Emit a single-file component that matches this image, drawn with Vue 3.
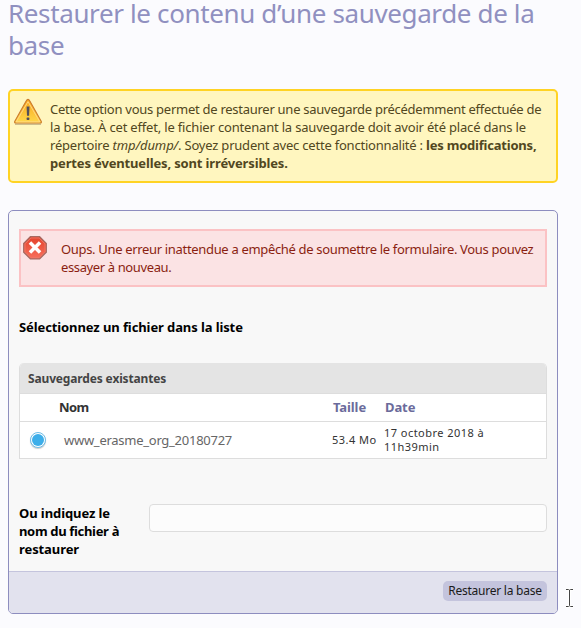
<script setup>
import { ref } from 'vue'

const selected = ref('www_erasme_org_20180727')
const fileName = ref('')
const backups = [
  { name: 'www_erasme_org_20180727', size: '53.4 Mo', date: ['17 octobre 2018 à', '11h39min'] },
]
</script>

<template>
  <main class="page">
    <h1 class="title">
      <span class="line">Restaurer le contenu d’une sauvegarde de la</span>
      <span class="line">base</span>
    </h1>

    <section class="notice">
      <svg class="warn" width="30" height="28" viewBox="0 0 30 28">
        <defs>
          <linearGradient id="amber" x1="0" y1="0" x2="0" y2="1">
            <stop offset="0" stop-color="#f8a51b" />
            <stop offset="1" stop-color="#ffd94c" />
          </linearGradient>
        </defs>
        <path d="M2 26.2H28" stroke="#b9a779" stroke-width="1.6" opacity=".7" />
        <path d="M15 1.4Q16 1.4 16.7 2.8L28.3 23.4Q28.7 25 27.3 25H2.7Q1.3 25 1.7 23.4L13.3 2.8Q14 1.4 15 1.4Z" fill="url(#amber)" stroke="#cb7a2d" stroke-width="1.1" />
        <path d="M15 3.6L26.8 23.9H3.2Z" fill="none" stroke="#ffd88a" stroke-width=".9" stroke-linejoin="round" />
        <path d="M13.6 8.6H16.5L16.1 17.8H14Z" fill="#534f5b" />
        <rect x="13.6" y="19.4" width="2.8" height="2.6" rx=".7" fill="#534f5b" />
      </svg>
      <p class="text">
        <span class="line n1">Cette option vous permet de restaurer une sauvegarde précédemment effectuée de</span>
        <span class="line n2">la base. À cet effet, le fichier contenant la sauvegarde doit avoir été placé dans le</span>
        <span class="line n3"><span>répertoire </span><i>tmp/dump/</i><span>. Soyez prudent avec cette fonctionnalité : </span><b>les modifications,</b></span>
        <b class="line n4">pertes éventuelles, sont irréversibles.</b>
      </p>
    </section>

    <form class="form" @submit.prevent>
      <div class="body">
        <div class="error">
          <svg class="stop" width="24" height="24" viewBox="0 0 24 24">
            <defs>
              <linearGradient id="red" x1="0" y1="0" x2="0" y2="1">
                <stop offset="0" stop-color="#e3422c" />
                <stop offset="1" stop-color="#f8705c" />
              </linearGradient>
            </defs>
            <path d="M7.4.7H16.6L23.3 7.4V16.2L16.6 22.9H7.4L.7 16.2V7.4Z" fill="url(#red)" stroke="#a66a62" stroke-width="1.3" />
            <path d="M7.9 2H16.1L22 7.9V15.7L16.1 21.6H7.9L2 15.7V7.9Z" fill="none" stroke="#ee7767" stroke-width=".9" />
            <path d="M8.2 7.7L15.8 15.3M15.8 7.7L8.2 15.3" stroke="#fff" stroke-width="3.5" stroke-linecap="square" />
          </svg>
          <p class="text">
            <span class="line e1">Oups. Une erreur inattendue a empêché de soumettre le formulaire. Vous pouvez</span>
            <span class="line e2">essayer à nouveau.</span>
          </p>
        </div>

        <h2 class="pick">Sélectionnez un fichier dans la liste</h2>

        <div class="table">
          <div class="caption">Sauvegardes existantes</div>
          <div class="row head">
            <span></span>
            <span class="nom">Nom</span>
            <span class="link">Taille</span>
            <span class="link">Date</span>
          </div>
          <label v-for="b in backups" :key="b.name" class="row data">
            <span class="radio" :class="{ on: selected === b.name }"></span>
            <span class="name">{{ b.name }}</span>
            <span class="small">{{ b.size }}</span>
            <span class="small"><span v-for="d in b.date" :key="d" class="line">{{ d }}</span></span>
          </label>
        </div>

        <div class="field">
          <label class="label" for="file">
            <span class="line l1">Ou indiquez le</span>
            <span class="line l2">nom du fichier à</span>
            <span class="line l3">restaurer</span>
          </label>
          <input id="file" v-model="fileName" class="input" type="text" />
        </div>
      </div>
      <div class="footer">
        <button class="button" type="submit">Restaurer la base</button>
      </div>
    </form>

    <svg class="cursor" width="9" height="20" viewBox="0 0 9 20">
      <path d="M1 1.5H3.5L4.5 2.2L5.5 1.5H8M4.5 2V17.5M1 18.5H3.5L4.5 17.8L5.5 18.5H8" fill="none" stroke="#fff" stroke-width="3" />
      <path d="M1 1.5H3.5L4.5 2.2L5.5 1.5H8M4.5 2V17.5M1 18.5H3.5L4.5 17.8L5.5 18.5H8" fill="none" stroke="#444" stroke-width="1" />
    </svg>
  </main>
</template>

<style>
body { background: #fbfbfe; overflow: hidden; }
</style>

<style scoped>
* { box-sizing: border-box; }
.page { position: relative; width: 581px; height: 628px; overflow: hidden; padding-left: 8px; font: 13px/18px "Noto Sans", sans-serif; color: #000; }
.line { display: block; white-space: pre; }
.title { margin: -3px 0 0; font-size: 26px; line-height: 32px; font-weight: 400; letter-spacing: -.37px; color: #9090c0; }
.notice { display: flex; width: 550px; height: 94px; margin-top: 28px; border: 2px solid #ffd324; border-radius: 5px; background: #fff6bf; color: #514721; }
.warn { flex: none; margin: 7px 7px 0 3px; }
.text { margin: 9px 0 0; }
.n1 { letter-spacing: -.268px; }
.n2 { letter-spacing: -.18px; }
.n3 { letter-spacing: -.21px; }
.n3 i { letter-spacing: -.1px; }
.n4 { letter-spacing: -.15px; }
.e1 { letter-spacing: -.33px; }
.e2 { letter-spacing: -.38px; }
.form { display: flex; flex-direction: column; width: 550px; height: 404px; margin-top: 27px; border: 1px solid #8d8dbf; border-radius: 5px; overflow: hidden; background: #f8f8f8; }
.body { flex: 1; padding: 18px 10px 0; }
.error { display: flex; height: 58px; border: 2px solid #fbc2c4; background: #fbe3e4; color: #8a1f11; }
.stop { flex: none; margin: 5px 14px 0 2px; }
.pick { margin: 31px 0 0; font-size: 13px; font-weight: 700; letter-spacing: -.1px; }
.table { height: 96px; margin-top: 27px; border: 1px solid #ddd; border-top: 0; border-radius: 5px 5px 0 0; overflow: hidden; background: #fff; }
.caption { height: 31px; padding: 7px 8px 5px; border-bottom: 1px solid #ddd; background: #e4e4e4; color: #444; font-size: 12px; font-weight: 700; letter-spacing: -.15px; white-space: pre; }
.row { display: grid; grid-template-columns: 39px 274px 52px 1fr; align-items: center; white-space: pre; }
.head { height: 28px; padding-bottom: 2px; border-bottom: 1px solid #ddd; font-weight: 700; color: #333; }
.nom { letter-spacing: -.6px; }
.link { color: #6b6b9b; letter-spacing: -.1px; }
.data { height: 36px; color: #666; }
.radio { display: grid; place-items: center; width: 16px; height: 16px; margin-left: 10px; border: 1px solid #6cbde8; border-radius: 50%; background: #fff; box-shadow: 0 1px 1px #ccc; }
.radio.on::after { content: ""; width: 12px; height: 12px; border-radius: 50%; background: #3daee9; }
.name { padding-left: 5px; letter-spacing: -.26px; }
.small { margin-left: -1px; font-size: 11px; line-height: 14px; letter-spacing: .46px; color: #333; }
.field { display: flex; margin-top: 45px; }
.label { width: 130px; font-weight: 700; }
.l1, .l3 { letter-spacing: -.09px; }
.l2 { letter-spacing: -.33px; }
.input { width: 398px; height: 28px; padding: 4px; border: 1px solid #ddd; border-radius: 4px; background: #fcfcfc; font: inherit; outline: 0; }
.footer { display: flex; justify-content: flex-end; height: 42px; padding: 9px 10px; border-top: 1px solid #c4c4dd; background: #e2e2ee; }
.button { width: 104px; height: 20px; padding: 0; border: 0; border-radius: 5px; background: #c4c4dd; color: #1a1a1a; font: 12px/20px "Noto Sans", sans-serif; letter-spacing: -.25px; white-space: pre; }
.cursor { position: absolute; left: 565px; top: 588px; }
</style>
